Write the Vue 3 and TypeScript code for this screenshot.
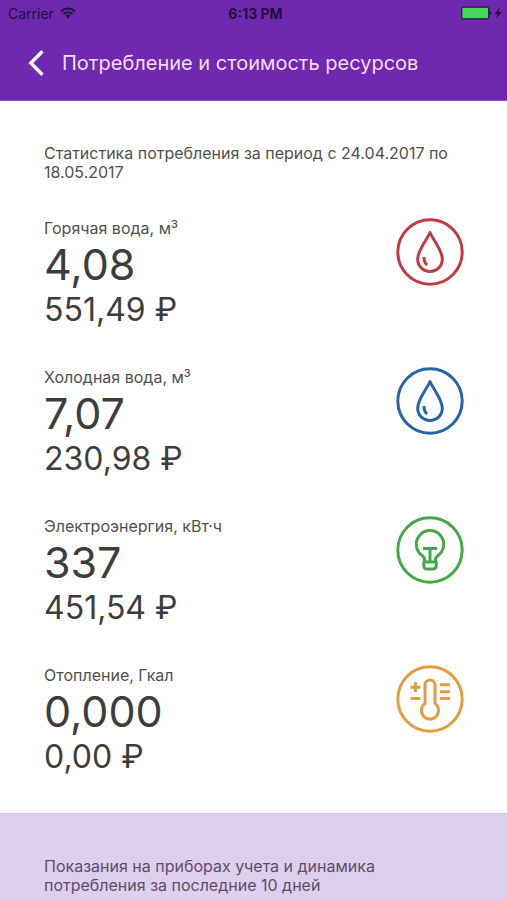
<script setup lang="ts">
type IconName = 'drop' | 'bulb' | 'thermometer'

interface Resource {
  id: string
  label: string
  cubic: boolean
  amount: string
  cost: string
  icon: IconName
  tone: string
}

const resources: Resource[] = [
  { id: 'hot', label: 'Горячая вода, м', cubic: true, amount: '4,08', cost: '551,49 ₽', icon: 'drop', tone: 'red' },
  { id: 'cold', label: 'Холодная вода, м', cubic: true, amount: '7,07', cost: '230,98 ₽', icon: 'drop', tone: 'blue' },
  { id: 'power', label: 'Электроэнергия, кВт·ч', cubic: false, amount: '337', cost: '451,54 ₽', icon: 'bulb', tone: 'green' },
  { id: 'heat', label: 'Отопление, Гкал', cubic: false, amount: '0,000', cost: '0,00 ₽', icon: 'thermometer', tone: 'orange' },
]
</script>

<template>
  <div class="screen">
    <header class="top">
      <div class="status">
        <div class="carrier">
          <span>Carrier</span>
          <svg class="wifi" viewBox="0 0 16 12" aria-hidden="true">
            <path d="M1 4.300a10.400 10.400 0 0 1 14 0M3.500 6.900a6.800 6.800 0 0 1 9 0" fill="none" stroke="currentColor" stroke-width="2" />
            <path d="M5.400 8.600a4 4 0 0 1 5.200 0L8 11.500z" fill="currentColor" />
          </svg>
        </div>
        <span class="time">6:13 PM</span>
        <svg class="battery" viewBox="0 0 42 14" aria-hidden="true">
          <rect x="0.700" y="1.200" width="27" height="11.600" rx="1.500" fill="#46d45b" stroke="#2b1450" stroke-width="1.200" />
          <path d="M28.500 4.800c2.400.4 2.400 4 0 4.400z" fill="#2b1450" />
          <path d="M38.800 1.500 33.600 7.900h2.900L35 12.700 40.600 6.200h-3.200z" fill="#1f0f3d" />
        </svg>
      </div>
      <nav class="bar">
        <button class="back" type="button" aria-label="Назад">
          <svg viewBox="0 0 18 28" aria-hidden="true">
            <path d="M14.500 2.200 2.800 14l11.700 11.800" fill="none" stroke="currentColor" stroke-width="3.400" />
          </svg>
        </button>
        <h1>Потребление и стоимость ресурсов</h1>
      </nav>
    </header>

    <main class="stats">
      <p class="period">Статистика потребления за период с 24.04.2017 по 18.05.2017</p>
      <ul class="list">
        <li v-for="item in resources" :key="item.id" class="row">
          <div>
            <h2>{{ item.label }}<sup v-if="item.cubic">3</sup></h2>
            <p class="amount">{{ item.amount }}</p>
            <p class="cost">{{ item.cost }}</p>
          </div>
          <svg class="icon" :class="item.tone" viewBox="0 0 68 68" aria-hidden="true">
            <circle cx="34" cy="34" r="32.200" />
            <template v-if="item.icon === 'drop'">
              <path d="M34 14.500C30 23.500 21.700 32 21.700 41.200a12.300 12.300 0 0 0 24.600 0C46.300 32 38 23.500 34 14.500z" />
              <path d="M28 39c-.1 3.400 1 6.300 3.100 8" />
            </template>
            <template v-else-if="item.icon === 'bulb'">
              <path d="M28.500 46v-2.500c0-1.800-.8-2.800-2.400-4a13.700 13.700 0 1 1 15.800 0c-1.600 1.200-2.400 2.200-2.400 4V46" />
              <path d="M27.800 46h12.400v4a3 3 0 0 1-3 3h-6.400a3 3 0 0 1-3-3zM27 32.400h14M34 32.400V46" />
            </template>
            <template v-else>
              <path d="M29 38.400V20a5 5 0 0 1 10 0v18.400a8.600 8.600 0 1 1-10 0z" />
              <path d="M14.500 22.200h9.800M19.400 17.300v9.800M14.500 33.600h9.800M44 19.700h10M44 26.700h10M44 33.600h10" />
            </template>
          </svg>
        </li>
      </ul>
    </main>

    <section class="meters">
      <p>Показания на приборах учета и динамика потребления за последние 10 дней</p>
    </section>
  </div>
</template>

<style>
body {
  margin: 0;
  background: #dfcfee;
}
</style>

<style scoped>
.screen {
  font-family: Inter, "Liberation Sans", sans-serif;
  font-size: 16px;
  line-height: 19px;
  color: #505050;
  background: #fff;
}

h1, h2, p, ul {
  margin: 0;
  padding: 0;
  font-size: inherit;
  font-weight: 400;
}

.top {
  background: #6e29b0;
  border-bottom: 1px solid #8a55c0;
}

.status {
  display: grid;
  grid-template-columns: 1fr auto 1fr;
  align-items: center;
  height: 26px;
  padding: 0 4px 0 8px;
  font-size: 14px;
  color: #1f0f3d;
}

.carrier {
  display: flex;
  align-items: center;
  gap: 6px;
}

.wifi {
  width: 16px;
  height: 12px;
}

.time {
  font-weight: 700;
}

.battery {
  width: 42px;
  height: 14px;
  justify-self: end;
}

.bar {
  display: flex;
  align-items: center;
  gap: 16px;
  height: 74px;
  padding: 0 28px;
}

.back {
  display: flex;
  padding: 0;
  border: 0;
  background: none;
  color: #fff;
  cursor: pointer;
}

.back svg {
  width: 18px;
  height: 28px;
}

h1 {
  font-size: 20px;
  line-height: 24px;
  color: #f3dcff;
}

h2 {
  line-height: 20px;
}

.stats {
  padding: 43px 43px 37px 44px;
}

.list {
  display: grid;
  gap: 38px;
  margin-top: 36px;
  list-style: none;
}

.row {
  display: flex;
  justify-content: space-between;
  align-items: flex-start;
}

sup {
  font-size: 11px;
  font-weight: 500;
  line-height: 0;
}

.amount {
  font-size: 43px;
  line-height: 53px;
  color: #3d3d3d;
}

.cost {
  font-size: 32px;
  line-height: 38px;
  color: #3d3d3d;
}

.icon {
  flex: none;
  width: 68px;
  height: 68px;
  fill: none;
  stroke: currentColor;
  stroke-width: 3;
  stroke-linejoin: round;
}

.red { color: #c23a40; }
.blue { color: #2763a5; }
.green { color: #43a848; }
.orange { color: #e39c3f; }

.meters {
  padding: 43px 44px 24px;
  background: #dfcfee;
  border-top: 1px solid #d5c8e0;
  color: #5c4e68;
}
</style>
